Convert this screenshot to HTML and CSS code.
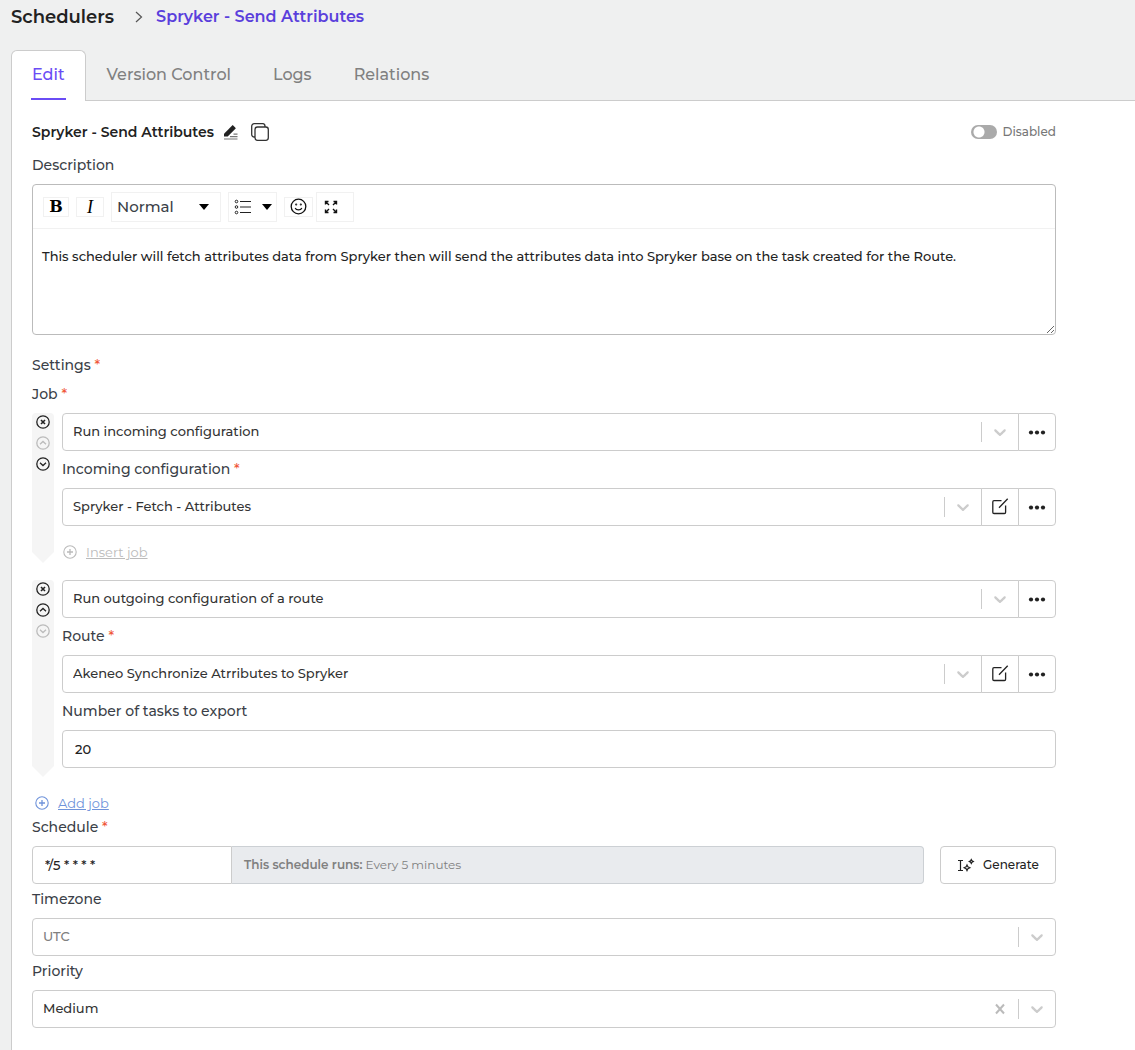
FILE: index.html
```html
<!DOCTYPE html>
<html lang="en">
<head>
    <meta charset="UTF-8">
    <meta name="viewport" content="width=device-width, initial-scale=1.0">
    <title>Schedulers - Spryker - Send Attributes</title>
    <link rel="stylesheet" href="styles.css">
</head>
<body>
    <!-- shared icons -->
    <svg class="sprite" aria-hidden="true">
        <symbol id="i-chevron" viewBox="0 0 20 20">
            <path d="M4.516 7.548c.436-.446 1.043-.481 1.576 0L10 11.295l3.908-3.747c.533-.481 1.141-.446 1.574 0 .436.445.408 1.197 0 1.615-.406.418-4.695 4.502-4.695 4.502a1.095 1.095 0 0 1-1.576 0S4.924 9.581 4.516 9.163s-.436-1.17 0-1.615z" fill="currentColor"/>
        </symbol>
        <symbol id="i-dots" viewBox="0 0 18 18">
            <circle cx="3" cy="9.500" r="2.1" fill="currentColor"/><circle cx="9" cy="9.500" r="2.1" fill="currentColor"/><circle cx="15" cy="9.500" r="2.1" fill="currentColor"/>
        </symbol>
        <symbol id="i-open" viewBox="0 0 18 18">
            <path d="M10.500 2.700H3a1.200 1.200 0 0 0-1.200 1.200v10.400A1.200 1.200 0 0 0 3 15.500h10.400a1.200 1.200 0 0 0 1.200-1.200V7.500M8 9.800 16.700.700" fill="none" stroke="currentColor" stroke-width="1.300"/>
        </symbol>
        <symbol id="i-close" viewBox="0 0 14 14">
            <circle cx="7" cy="7" r="6.200" fill="none" stroke="currentColor" stroke-width="1.300"/>
            <path d="M5 5l4 4M9 5l-4 4" stroke="currentColor" stroke-width="1.600"/>
        </symbol>
        <symbol id="i-up" viewBox="0 0 14 14">
            <circle cx="7" cy="7" r="6.200" fill="none" stroke="currentColor" stroke-width="1.300"/>
            <path d="M4 8.300 7 5.500l3 2.800" fill="none" stroke="currentColor" stroke-width="1.300"/>
        </symbol>
        <symbol id="i-down" viewBox="0 0 14 14">
            <circle cx="7" cy="7" r="6.200" fill="none" stroke="currentColor" stroke-width="1.300"/>
            <path d="M4 5.700 7 8.500l3-2.800" fill="none" stroke="currentColor" stroke-width="1.300"/>
        </symbol>
        <symbol id="i-plus" viewBox="0 0 14 14">
            <circle cx="7" cy="7" r="6.200" fill="none" stroke="currentColor" stroke-width="1.100"/>
            <path d="M7 4v6M4 7h6" stroke="currentColor" stroke-width="1.300"/>
        </symbol>
    </svg>

    <header class="breadcrumb">
        <h1>Schedulers</h1>
        <svg width="8" height="12" viewBox="0 0 8 12"><path d="M1 1l5.500 5L1 11" fill="none" stroke="#555" stroke-width="1.200"/></svg>
        <a href="#">Spryker - Send Attributes</a>
    </header>

    <nav class="tabs">
        <a href="#" class="tab active"><span>Edit</span></a>
        <a href="#" class="tab">Version Control</a>
        <a href="#" class="tab">Logs</a>
        <a href="#" class="tab">Relations</a>
    </nav>

    <main class="panel">
        <div class="title-row">
            <h2>Spryker - Send Attributes</h2>
            <button class="icon-btn" type="button" aria-label="Rename">
                <svg width="14" height="16" viewBox="0 0 14 16">
                    <path d="M0 12.500V9.800L8.700 1.100l3.200 3.200L3.700 12.500z" fill="#222"/>
                    <path d="M0 15h13.500M6 12.600h7.500M9.500 10.200h4" stroke="#777" stroke-width="1.200"/>
                </svg>
            </button>
            <button class="icon-btn" type="button" aria-label="Copy">
                <svg width="18" height="18" viewBox="0 0 18 18" fill="none" stroke="#333" stroke-width="1.300">
                    <rect x="4" y="4" width="13.300" height="13.300" rx="2.500"/>
                    <path d="M4 14H3.200A2.500 2.500 0 0 1 .7 11.500V3.200A2.500 2.500 0 0 1 3.200.7h8.600A2.500 2.500 0 0 1 14 3.200V4"/>
                </svg>
            </button>
            <label class="switch"><input type="checkbox">Disabled</label>
        </div>

        <div class="field">
            <label for="description">Description</label>
            <div class="editor">
                <div class="toolbar">
                    <button class="tool bold" type="button">B</button>
                    <button class="tool italic" type="button">I</button>
                    <div class="block-type">
                        <select aria-label="Block type"><option>Normal</option></select>
                        <span class="caret"></span>
                    </div>
                    <button class="tool tall list" type="button" aria-label="List">
                        <svg width="18" height="16" viewBox="0 0 18 16" fill="none" stroke="#222">
                            <circle cx="2.500" cy="2.500" r="1.300"/><circle cx="2.500" cy="8" r="1.300"/><circle cx="2.500" cy="13.500" r="1.300"/>
                            <path d="M6 2.500h11M6 8h11M6 13.500h11"/>
                        </svg>
                        <span class="caret"></span>
                    </button>
                    <button class="tool emoji" type="button" aria-label="Emoji">
                        <svg width="17" height="17" viewBox="0 0 17 17" fill="none" stroke="#111" stroke-width="1.300">
                            <circle cx="8.500" cy="8.500" r="7.300"/>
                            <path d="M5.200 10c1 2.600 5.600 2.600 6.600 0"/>
                            <circle cx="6.200" cy="6.500" r=".4"/><circle cx="10.800" cy="6.500" r=".4"/>
                        </svg>
                    </button>
                    <button class="tool tall expand" type="button" aria-label="Full screen">
                        <svg width="14" height="14" viewBox="0 0 14 14" fill="none" stroke="#111" stroke-width="1.400">
                            <path d="M1.500 4.500v-3h3M1.500 1.500l3.500 3.500M9.500 1.500h3v3M12.500 1.500L9 5M1.500 9.500v3h3M1.500 12.500L5 9M12.500 9.500v3h-3M12.500 12.500L9 9"/>
                        </svg>
                    </button>
                </div>
                <textarea id="description">This scheduler will fetch attributes data from Spryker then will send the attributes data into Spryker base on the task created for the Route.</textarea>
            </div>
        </div>

        <section class="settings">
            <p class="label">Settings <i>*</i></p>
            <p class="label">Job <i>*</i></p>

            <div class="job">
                <div class="rail">
                    <button type="button" aria-label="Remove job"><svg><use href="#i-close"/></svg></button>
                    <button type="button" aria-label="Move up" disabled><svg><use href="#i-up"/></svg></button>
                    <button type="button" aria-label="Move down"><svg><use href="#i-down"/></svg></button>
                </div>
                <div class="job-body">
                    <div class="group">
                        <div class="select">
                            <select aria-label="Job type"><option>Run incoming configuration</option></select>
                            <span class="arrow"><svg><use href="#i-chevron"/></svg></span>
                        </div>
                        <button class="addon" type="button" aria-label="More"><svg><use href="#i-dots"/></svg></button>
                    </div>
                    <div class="field">
                        <label for="incoming">Incoming configuration <i>*</i></label>
                        <div class="group">
                            <div class="select">
                                <select id="incoming"><option>Spryker - Fetch - Attributes</option></select>
                                <span class="arrow"><svg><use href="#i-chevron"/></svg></span>
                            </div>
                            <button class="addon" type="button" aria-label="Open"><svg><use href="#i-open"/></svg></button>
                            <button class="addon" type="button" aria-label="More"><svg><use href="#i-dots"/></svg></button>
                        </div>
                    </div>
                    <a href="#" class="add-link muted"><svg><use href="#i-plus"/></svg><span>Insert job</span></a>
                </div>
            </div>

            <div class="job last">
                <div class="rail">
                    <button type="button" aria-label="Remove job"><svg><use href="#i-close"/></svg></button>
                    <button type="button" aria-label="Move up"><svg><use href="#i-up"/></svg></button>
                    <button type="button" aria-label="Move down" disabled><svg><use href="#i-down"/></svg></button>
                </div>
                <div class="job-body">
                    <div class="group">
                        <div class="select">
                            <select aria-label="Job type"><option>Run outgoing configuration of a route</option></select>
                            <span class="arrow"><svg><use href="#i-chevron"/></svg></span>
                        </div>
                        <button class="addon" type="button" aria-label="More"><svg><use href="#i-dots"/></svg></button>
                    </div>
                    <div class="field">
                        <label for="route">Route <i>*</i></label>
                        <div class="group">
                            <div class="select">
                                <select id="route"><option>Akeneo Synchronize Atrributes to Spryker</option></select>
                                <span class="arrow"><svg><use href="#i-chevron"/></svg></span>
                            </div>
                            <button class="addon" type="button" aria-label="Open"><svg><use href="#i-open"/></svg></button>
                            <button class="addon" type="button" aria-label="More"><svg><use href="#i-dots"/></svg></button>
                        </div>
                    </div>
                    <div class="field">
                        <label for="tasks">Number of tasks to export</label>
                        <input class="text" type="text" id="tasks" value="20">
                    </div>
                </div>
            </div>

            <a href="#" class="add-link"><svg><use href="#i-plus"/></svg><span>Add job</span></a>
        </section>

        <div class="field">
            <label for="schedule">Schedule <i>*</i></label>
            <div class="schedule">
                <input class="text cron" type="text" id="schedule" value="*/5 * * * *">
                <div class="runs"><b>This schedule runs:</b> Every 5 minutes</div>
                <button class="generate" type="button">
                    <svg width="18" height="16" viewBox="0 0 18 16" fill="none" stroke="#222" stroke-width="1.200">
                        <path d="M1 3.500h5M3.500 3.500v10M1 13.500h5"/>
                        <path d="M10 8l.9 1.900 1.900.9-1.900.9-.9 1.900-.9-1.900-1.900-.9 1.900-.9zM14.300 2.500l.7 1.300 1.300.7-1.300.7-.7 1.300-.7-1.300-1.300-.7 1.300-.7z"/>
                    </svg>
                    Generate
                </button>
            </div>
        </div>

        <div class="field">
            <label for="timezone">Timezone</label>
            <div class="select placeholder">
                <select id="timezone"><option>UTC</option></select>
                <span class="arrow"><svg><use href="#i-chevron"/></svg></span>
            </div>
        </div>

        <div class="field">
            <label for="priority">Priority</label>
            <div class="select">
                <select id="priority"><option>Medium</option></select>
                <button class="clear" type="button" aria-label="Clear">
                    <svg width="12" height="12" viewBox="0 0 12 12"><path d="M2 1.500l8 9M10 1.500l-8 9" stroke="currentColor" stroke-width="2"/></svg>
                </button>
                <span class="arrow"><svg><use href="#i-chevron"/></svg></span>
            </div>
        </div>
    </main>
</body>
</html>
```

FILE: styles.css
```css
* {
    box-sizing: border-box;
}
body {
    margin: 0;
    padding-left: 11px;
    min-height: 100vh;
    display: flex;
    flex-direction: column;
    background-color: #eff0f0;
    color: #222;
    font-family: Montserrat, Inter, sans-serif;
    font-size: 13px;
    font-weight: 500;
    line-height: 20px;
}
h1, h2, p {
    margin: 0;
}
button, input, select, textarea {
    font: inherit;
    color: inherit;
}
button {
    padding: 0;
    border: none;
    background: none;
    cursor: pointer;
}
.sprite {
    display: none;
}

/* header */
.breadcrumb {
    display: flex;
    align-items: center;
    gap: 21px;
    height: 34px;
    margin-bottom: 16px;
}
.breadcrumb h1 {
    font-size: 18px;
    font-weight: 600;
}
.breadcrumb a {
    margin-left: -8px;
    color: #5a3fdc;
    font-size: 16px;
    font-weight: 600;
    text-decoration: none;
}
.tabs {
    display: flex;
}
.tab {
    height: 50px;
    padding: 0 21px;
    color: #808080;
    font-size: 16px;
    line-height: 50px;
    text-decoration: none;
}
.tab.active {
    height: 51px;
    margin-bottom: -1px;
    padding: 0 19px;
    border: 1px solid #ccc;
    border-bottom: none;
    border-radius: 6px 6px 0 0;
    background: #fff;
    color: #6a4cf5;
    line-height: 48px;
    z-index: 1;
}
.tab.active span {
    display: block;
    height: 49px;
    padding: 0 1px;
    border-bottom: 2px solid #6a4cf5;
}
.panel {
    flex: 1;
    padding: 20px 79px 22px 20px;
    border-top: 1px solid #ccc;
    border-left: 1px solid #ccc;
    background: #fff;
}

/* title */
.title-row {
    display: flex;
    align-items: center;
    height: 22px;
    margin-bottom: 12px;
}
.title-row h2 {
    font-size: 14px;
    font-weight: 600;
}
.icon-btn {
    display: flex;
    margin-left: 10px;
}
.icon-btn + .icon-btn {
    margin-left: 13px;
}
.switch {
    display: flex;
    align-items: center;
    gap: 5px;
    margin-left: auto;
    color: #777;
    font-size: 12px;
}
.switch input {
    appearance: none;
    width: 26px;
    height: 14px;
    margin: 0;
    border-radius: 7px;
    background: radial-gradient(circle at 8px 7px, #fff 5px, transparent 6px) #aaa;
}

/* fields */
.field {
    margin-bottom: 5px;
}
.field label, .label {
    display: block;
    margin-bottom: 9px;
    color: #3b3f48;
    font-size: 14px;
}
i {
    color: #f0583a;
    font-style: normal;
}
.text {
    display: block;
    width: 100%;
    height: 38px;
    padding: 0 12px;
    border: 1px solid #ccc;
    border-radius: 4px;
    background: #fff;
}
.select {
    position: relative;
    flex: 1;
}
.select select {
    display: block;
    appearance: none;
    width: 100%;
    height: 38px;
    padding: 0 60px 2px 10px;
    border: 1px solid #ccc;
    border-radius: 4px;
    background: #fff;
    color: #333;
}
.placeholder select {
    color: #808080;
}
.arrow {
    position: absolute;
    top: 9px;
    right: 1px;
    display: flex;
    justify-content: center;
    width: 37px;
    border-left: 1px solid #ccc;
    color: #ccc;
    pointer-events: none;
}
.arrow svg {
    width: 20px;
    height: 20px;
}
.clear {
    position: absolute;
    top: 13px;
    right: 50px;
    display: flex;
    color: #bbb;
}
.group {
    display: flex;
}
.group select {
    border-radius: 4px 0 0 4px;
}
.addon {
    display: flex;
    align-items: center;
    justify-content: center;
    width: 38px;
    height: 38px;
    margin-left: -1px;
    border: 1px solid #ccc;
    background: #fff;
}
.addon:last-child {
    border-radius: 0 4px 4px 0;
}
.addon svg {
    width: 18px;
    height: 18px;
}

/* description editor */
.editor {
    margin-bottom: 20px;
    border: 1px solid #bbb;
    border-radius: 4px;
}
.toolbar {
    display: flex;
    align-items: center;
    gap: 7px;
    height: 44px;
    padding-left: 10px;
    border-bottom: 1px solid #f1f1f1;
}
.tool, .block-type {
    display: flex;
    align-items: center;
    justify-content: center;
    border: 1px solid #f1f1f1;
}
.tool {
    width: 28px;
    height: 20px;
}
.tall {
    height: 30px;
}
.bold, .italic {
    color: #000;
    font-family: "DejaVu Serif", serif;
    font-size: 16px;
    font-weight: 700;
}
.bold {
    width: 26px;
}
.italic {
    font-family: "Liberation Serif", serif;
    font-size: 18px;
    font-style: italic;
    font-weight: 400;
}
.block-type {
    position: relative;
    width: 110px;
    height: 30px;
}
.block-type select {
    appearance: none;
    width: 100%;
    padding: 0 5px;
    border: none;
    background: none;
    color: #3b3f48;
    font-size: 15px;
}
.caret {
    border: 5px solid transparent;
    border-top: 6px solid #000;
    border-bottom: none;
}
.block-type .caret {
    position: absolute;
    right: 11px;
    pointer-events: none;
}
.list {
    width: 49px;
    gap: 10px;
}
.emoji {
    width: 29px;
}
.expand {
    width: 38px;
    margin-left: -4px;
    padding-right: 8px;
}
textarea {
    display: block;
    width: 100%;
    height: 105px;
    padding: 17px 9px;
    border: none;
    background: none;
    resize: vertical;
}

/* jobs */
.settings {
    margin-bottom: 4px;
}
.job {
    display: flex;
    gap: 8px;
    margin-bottom: 17px;
}
.job.last {
    margin-bottom: 16px;
}
.rail {
    display: flex;
    flex-direction: column;
    align-items: center;
    gap: 7px;
    width: 22px;
    padding-top: 2px;
    border-radius: 4px;
    background: #f5f5f5;
    clip-path: polygon(0 0, 100% 0, 100% calc(100% - 11px), 50% 100%, 0 calc(100% - 11px));
}
.rail button {
    display: flex;
}
.rail button:disabled {
    color: #bbb;
}
.rail svg, .add-link svg {
    width: 14px;
    height: 14px;
}
.job-body {
    flex: 1;
    padding-bottom: 1px;
}
.job.last .job-body {
    padding-bottom: 9px;
}
.job-body .field {
    margin: 8px 0 0;
}
.add-link {
    display: flex;
    align-items: center;
    gap: 9px;
    padding-left: 3px;
    color: #6f93da;
    font-weight: 400;
}
.add-link.muted {
    margin-top: 16px;
    padding-left: 1px;
    color: #bbb;
}

/* schedule */
.schedule {
    display: flex;
}
.cron {
    width: 200px;
    border-radius: 4px 0 0 4px;
}
.runs {
    flex: 1;
    height: 38px;
    margin-right: 16px;
    padding: 0 12px;
    border: 1px solid #ccd0d4;
    border-left: none;
    border-radius: 0 4px 4px 0;
    background: #e9ebee;
    color: #808080;
    font-size: 12px;
    font-weight: 400;
    line-height: 36px;
}
.runs b {
    font-weight: 600;
}
.generate {
    display: flex;
    align-items: center;
    justify-content: center;
    gap: 8px;
    width: 116px;
    height: 38px;
    border: 1px solid #ccc;
    border-radius: 4px;
    font-size: 12px;
}
```
